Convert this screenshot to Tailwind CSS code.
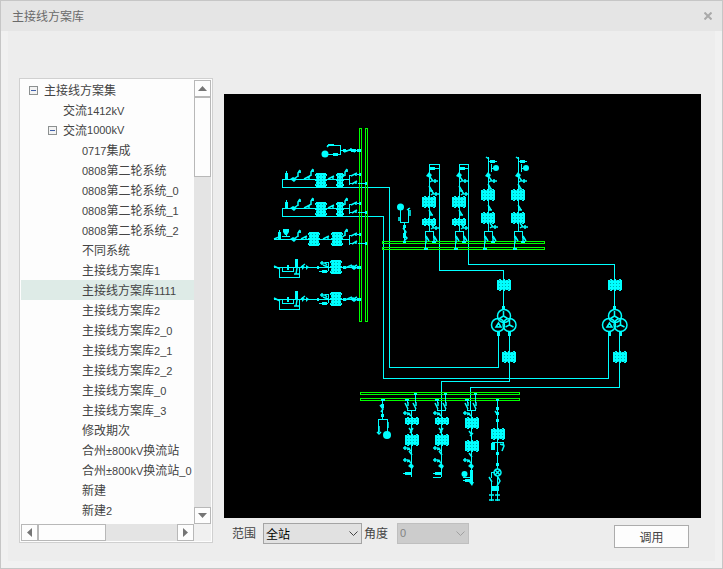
<!DOCTYPE html>
<html lang="zh-CN">
<head>
<meta charset="utf-8">
<title>主接线方案库</title>
<script src="https://cdn.jsdelivr.net/npm/@tailwindcss/browser@4"></script>
</head>
<body class="flex min-h-screen flex-col border border-[#c6c6c6] bg-[#f1f1f1] font-['Noto_Sans_CJK_SC',sans-serif] text-xs text-[#444] [&_small]:font-['Liberation_Sans','Noto_Sans_CJK_SC',sans-serif] [&_small]:text-[11px]">
<header class="flex h-[30px] items-center justify-between bg-[#e5e5e5] pr-[10px] pl-[11px]">
  <h1 class="text-[#6a6a6a]">主接线方案库</h1>
  <button type="button" aria-label="关闭" class="flex">
    <svg class="size-2" viewBox="0 0 8 8" fill="none" stroke="#a9a9a9" stroke-width="2"><path d="M.5.500l7 7M7.500.500l-7 7"/></svg>
  </button>
</header>

<main class="mx-[7px] mb-[7px] flex flex-1 items-start gap-[11px] bg-[#ededed] pt-[47px] pr-[14px] pl-[11px]">
  <nav aria-label="方案树" class="grid h-[465px] w-[194px] shrink-0 grid-cols-[1fr_17px] grid-rows-[1fr_17px] border border-[#d0d0d0] bg-[#fdfdfd] p-px">
    <ul role="tree" class="overflow-hidden leading-5 whitespace-nowrap [&_li]:h-5">
      <li role="treeitem" aria-expanded="true" class="flex items-center pl-2">
        <button type="button" aria-label="折叠" class="mr-[6px] flex"><svg class="size-[9px]" viewBox="0 0 9 9" shape-rendering="crispEdges"><rect x=".5" y=".5" width="8" height="8" fill="#f3f3f3" stroke="#8c9090"/><path d="M2 4.5h5" stroke="#3f5fa8"/></svg></button>主接线方案集</li>
      <li role="treeitem" class="pl-[42px]">交流<small>1412kV</small></li>
      <li role="treeitem" aria-expanded="true" class="flex items-center pl-[27px]">
        <button type="button" aria-label="折叠" class="mr-[6px] flex"><svg class="size-[9px]" viewBox="0 0 9 9" shape-rendering="crispEdges"><rect x=".5" y=".5" width="8" height="8" fill="#f3f3f3" stroke="#8c9090"/><path d="M2 4.5h5" stroke="#3f5fa8"/></svg></button>交流<small>1000kV</small></li>
      <li role="treeitem" class="pl-[61px]"><small>0717</small>集成</li>
      <li role="treeitem" class="pl-[61px]"><small>0808</small>第二轮系统</li>
      <li role="treeitem" class="pl-[61px]"><small>0808</small>第二轮系统<small>_0</small></li>
      <li role="treeitem" class="pl-[61px]"><small>0808</small>第二轮系统<small>_1</small></li>
      <li role="treeitem" class="pl-[61px]"><small>0808</small>第二轮系统<small>_2</small></li>
      <li role="treeitem" class="pl-[61px]">不同系统</li>
      <li role="treeitem" class="pl-[61px]">主接线方案库<small>1</small></li>
      <li role="treeitem" aria-selected="true" class="bg-[#deebe7] pl-[61px]">主接线方案库<small>1111</small></li>
      <li role="treeitem" class="pl-[61px]">主接线方案库<small>2</small></li>
      <li role="treeitem" class="pl-[61px]">主接线方案库<small>2_0</small></li>
      <li role="treeitem" class="pl-[61px]">主接线方案库<small>2_1</small></li>
      <li role="treeitem" class="pl-[61px]">主接线方案库<small>2_2</small></li>
      <li role="treeitem" class="pl-[61px]">主接线方案库<small>_0</small></li>
      <li role="treeitem" class="pl-[61px]">主接线方案库<small>_3</small></li>
      <li role="treeitem" class="pl-[61px]">修改期次</li>
      <li role="treeitem" class="pl-[61px]">合州<small>±800kV</small>换流站</li>
      <li role="treeitem" class="pl-[61px]">合州<small>±800kV</small>换流站<small>_0</small></li>
      <li role="treeitem" class="pl-[61px]">新建</li>
      <li role="treeitem" class="pl-[61px]">新建<small>2</small></li>
    </ul>
    <div class="flex flex-col bg-[#e4e4e4]">
      <button type="button" aria-label="向上滚动" class="flex h-[17px] items-center justify-center border border-[#b8b8b8] bg-[#fdfdfd]"><svg class="h-[5px] w-[9px]" viewBox="0 0 9 5" fill="#757575"><path d="M0 5L4.500 0 9 5z"/></svg></button>
      <div class="h-20 border border-[#b8b8b8] bg-[#fdfdfd]"></div>
      <button type="button" aria-label="向下滚动" class="mt-auto flex h-[17px] items-center justify-center border border-[#b8b8b8] bg-[#fdfdfd]"><svg class="h-[5px] w-[9px]" viewBox="0 0 9 5" fill="#757575"><path d="M0 0L4.500 5 9 0z"/></svg></button>
    </div>
    <div class="flex bg-[#e4e4e4]">
      <button type="button" aria-label="向左滚动" class="flex w-[17px] items-center justify-center border border-[#b8b8b8] bg-[#fdfdfd]"><svg class="h-[9px] w-[5px]" viewBox="0 0 5 9" fill="#757575"><path d="M5 0L0 4.500 5 9z"/></svg></button>
      <div class="w-[68px] border border-[#b8b8b8] bg-[#fdfdfd]"></div>
      <button type="button" aria-label="向右滚动" class="ml-auto flex w-[17px] items-center justify-center border border-[#b8b8b8] bg-[#fdfdfd]"><svg class="h-[9px] w-[5px]" viewBox="0 0 5 9" fill="#757575"><path d="M0 0L5 4.500 0 9z"/></svg></button>
    </div>
    <div class="bg-[#f0f0f0]"></div>
  </nav>

  <section class="min-w-0 flex-1 pt-4">
    <svg class="block w-full bg-black [&_circle]:stroke-[1.5px] [&_path:not([shape-rendering])]:stroke-[1.5px]" viewBox="224 94 477 424" fill="none" stroke="#0ff" stroke-width="1" role="img" aria-label="电气主接线图">
      <defs>
        <pattern id="weave" width="3" height="3" patternUnits="userSpaceOnUse"><rect width="3" height="3" fill="#0ff" stroke="none"/><rect x="1" y="1" width="1" height="1" fill="#0aa" stroke="none"/></pattern>
        <!-- breaker cabinets, origin at the centre -->
        <g id="cabTall" stroke="none" fill="url(#weave)"><rect x="-5" y="-7" width="10" height="14"/><path d="M-6-6H6v2H-6zM-6-1H6v2H-6zM-6 4H6v2H-6z"/></g>
        <g id="cabSlim" stroke="none" fill="url(#weave)"><rect x="-3" y="-7" width="6" height="14"/><path d="M-4-6H4v2H-4zM-4-1H4v2H-4zM-4 4H4v2H-4z"/></g>
        <g id="cabWide" stroke="none" fill="url(#weave)"><rect x="-7" y="-5" width="14" height="10"/><path d="M-5-6h2V6h-2zM-1-6h2V6h-2zM4-6h2V6H4z"/></g>
        <g id="cabLow" stroke="none" fill="url(#weave)"><rect x="-7" y="-3" width="14" height="6"/><path d="M-5-4h2V4h-2zM-1-4h2V4h-2zM4-4h2V4H4z"/></g>
        <!-- horizontal bay end: two disconnectors towards the double bus -->
        <g id="hFork"><path shape-rendering="crispEdges" d="M.5-3.500v9M0-3.500h2M8-4.500h4M0 4.500h3M9 4.500h9"/><path d="M2-3l6-3M3 5l5-3M7-6v3M7 2v3"/><path fill="#0ff" d="M10-6h2v3h-2zM16 3h2v3h-2z" stroke="none"/></g>
        <g id="hEarth"><path d="M0 0l4-3M4-2v-4l2-3M4-7h3M6-9v3"/></g>
        <g id="hSwitch"><path d="M0 0l6-3M5-2v3"/></g>
        <g id="hLine">
          <path shape-rendering="crispEdges" d="M282 179.500h67M282.500 179v9"/>
          <path fill="#0ff" stroke="none" d="M285 173h3v6h-3zM286 171h1v2h-1zM290 179l3-2 4 2-3 3z"/>
          <use href="#hEarth" x="294" y="179"/><use href="#hSwitch" x="304" y="179"/><use href="#hEarth" x="307" y="178"/>
          <use href="#cabTall" x="321" y="180"/><use href="#hSwitch" x="328" y="179"/><use href="#cabSlim" x="340" y="180"/><use href="#hEarth" x="341" y="178"/>
          <use href="#hFork" x="349" y="179"/>
        </g>
        <g id="hReactor">
          <path shape-rendering="crispEdges" d="M274 267.500h86M279.500 268v9.500h20v-10M282.500 268v3.500h11v-4M328.500 262v9M319 271.500h9M325 262.500h4"/>
          <path d="M274 266l6 3M297 268l-1 6M294 274h5M301 267l4-3M320 263h5l2 2M322 261v4M323 265l5 2M345 268l7-3M352 268l5-3"/>
          <path fill="#0ff" stroke="none" d="M287 265h2v5h-2zM295 259h3v8h-3zM302 265l3 2-3 3zM306 265l3 2-3 3zM317 266h2v3h-2zM322 270h5v3h-5zM343 266h3v3h-3zM350 267l3-2 4 3-3 2zM357 266h4v3h-4z"/>
          <use href="#cabTall" x="336" y="267"/>
        </g>
        <!-- vertical bays, origin on the feeder axis -->
        <g id="vEarth"><path d="M1-4l3 4h5M6-2v4M1 1l3-2"/></g>
        <g id="vSwitch"><path d="M0 0l3 5M0 5h4"/></g>
        <g id="vFork"><path shape-rendering="crispEdges" d="M-3.500 7V.500h8V7M-3.500 11v7M4.500 11v1"/><path d="M-3 5l3 5M5 5l3 5M-3 7v5M5 7v4"/><path fill="#0ff" stroke="none" d="M-5 17h4v2h-4zM3 10h4v2H3z"/></g>
        <g id="vLine">
          <path shape-rendering="crispEdges" d="M.5 164v67M0 164.500h10"/>
          <path fill="#0ff" stroke="none" d="M1 167h5v3H1zM6 168h4v1H6zM0 172l3 3-2 3-4-2z"/>
          <use href="#vEarth" x="0" y="181"/><use href="#vSwitch" x="0" y="186"/><use href="#vEarth" x="1" y="194"/>
          <use href="#cabWide" x="0" y="202"/><use href="#vSwitch" x="0" y="210"/><use href="#cabLow" x="0" y="222"/><use href="#vEarth" x="1" y="228"/>
          <use href="#vFork" x="0" y="231"/>
        </g>
        <g id="vTap">
          <path shape-rendering="crispEdges" d="M.5 157v74M0 161.500h9M3.500 164v8M4 168.500h3"/>
          <path d="M-2 157l3 2"/>
          <path fill="#0ff" stroke="none" d="M2 160h5v3H2zM0 172l3 3-2 3-4-2z"/><circle cx="8" cy="168" r="3" fill="#0ff" stroke="none"/>
          <use href="#vEarth" x="0" y="181"/><use href="#vSwitch" x="0" y="184"/><use href="#cabWide" x="0" y="195"/><use href="#vSwitch" x="0" y="205"/><use href="#cabWide" x="0" y="218"/><use href="#vEarth" x="1" y="227"/>
          <use href="#vFork" x="0" y="231"/>
        </g>
        <g id="lowFork"><path shape-rendering="crispEdges" d="M-3.500 400v3M4.500 394v9M-3.500 408v2.500h8V408"/><path d="M-6 403l3 6M2 403l3 6M-3 402v4M5 402v4"/><path fill="#0ff" stroke="none" d="M-6 399h4v2h-4zM3 393h3v2H3z"/></g>
        <g id="lowEarth"><path d="M0 3l-3-3h-5M-6-2v4M-4 2l3-2"/></g>
        <g id="lowBay">
          <use href="#lowFork"/><path shape-rendering="crispEdges" d="M.5 410v67"/>
          <use href="#lowEarth" y="413"/><use href="#cabLow" x="1" y="421"/><path d="M-2 428l3 4M-1 433l3-5"/><use href="#cabWide" x="1" y="440"/>
          <use href="#lowEarth" y="448"/><path d="M-2 451l3 4"/><use href="#lowEarth" y="460"/>
          <path fill="#0ff" stroke="none" d="M0 463l3 3-2 3-4-3zM-6 472h6v3h-6zM-8 473h2v1h-2z"/>
        </g>
        <g id="transformer">
          <circle cx="504" cy="316" r="6.500"/><circle cx="498" cy="325" r="6.500"/><circle cx="509.500" cy="325" r="6.500"/>
          <path d="M503.500 311v5l-4 2.500M503.500 316l4 2.500M509.500 319v6l-4 2M509.500 325l4 2M496 327l2.500-4 2.500 4z"/>
          <path fill="#0ff" stroke="none" d="M502 306h3v3h-3zM497 332h3v4h-3zM508 332h3v4h-3z"/>
          <use href="#cabWide" x="504" y="285"/><use href="#cabWide" x="509" y="357"/>
        </g>
      </defs>

      <path shape-rendering="crispEdges" d="M282 187.500h107.500v180h109V332M282.500 208v8.500h101v162h225V332M439.500 164v106.500h64V309M468.500 164v100.500h146V309M509.500 332v49.500h-68V411M619.500 332v55.500h-149V411"/>
      <path shape-rendering="crispEdges" stroke="#0f0" d="M359.500 128.500h2v193h-2zM365.500 128.500h2v193h-2zM382.500 241.500h162v2h-162zM382.500 247.500h162v2h-162zM360.500 392.500h159v2h-159zM360.500 398.500h159v2h-159z"/>

      <g>
        <path shape-rendering="crispEdges" d="M327 145.500h13.500v9H325M340 150.500h20"/>
        <path d="M327 147l2-2v-1M344 152l8-3M350 149l5 3"/>
        <circle cx="325" cy="154" r="3.500" fill="#0ff" stroke="none"/>
        <path fill="#0ff" stroke="none" d="M328 144h6v2h-6zM333 153h5v3h-5zM343 149h3v3h-3zM351 149h5v3h-5zM357 149h4v3h-4z"/>
      </g>
      <use href="#hLine"/><use href="#hLine" y="29"/>
      <g>
        <path shape-rendering="crispEdges" d="M274 239.500h75M282 236.500h8M286.500 236v-2"/>
        <path d="M274 239l5-2"/><path fill="#0ff" stroke="none" d="M278 232h3v7h-3zM279 230h1v2h-1zM290 239l3-2 4 2-3 3zM283 229h6v3l-2 3h-2l-2-3z"/>
        <use href="#hEarth" x="294" y="239"/><use href="#hSwitch" x="301" y="239"/><use href="#cabTall" x="314" y="239"/><use href="#hSwitch" x="323" y="239"/><use href="#cabTall" x="337" y="239"/><use href="#hEarth" x="341" y="238"/><use href="#hFork" x="349" y="239"/>
      </g>
      <use href="#hReactor"/><use href="#hReactor" y="32"/>

      <g>
        <path shape-rendering="crispEdges" d="M400.500 208v14.500h8V208M404.500 222v20"/>
        <path d="M407 210l3-2M403 228l3 4-2 3 3 3-3 3M399 217v4M410 210v6"/><circle cx="400.500" cy="207" r="3.500" fill="#0ff" stroke="none"/>
        <path fill="#0ff" stroke="none" d="M403 225h3v3h-3zM403 233h3v5h-3zM403 241h3v2h-3z"/>
      </g>
      <use href="#vLine" x="429"/><use href="#vLine" x="459"/><use href="#vTap" x="488"/><use href="#vTap" x="518"/>

      <use href="#transformer"/><use href="#transformer" x="111"/>

      <g>
        <path shape-rendering="crispEdges" d="M382.500 400v19.500M378.500 433v-13.500h9V433"/>
        <path d="M377 432l2 2 2-2M380 405l3 4-2 3M379 426v6M388 422v6"/><circle cx="387" cy="435" r="4" fill="#0ff" stroke="none"/>
        <path fill="#0ff" stroke="none" d="M381 399h4v2h-4zM381 404h3v4h-3zM381 414h3v3h-3z"/>
      </g>
      <use href="#lowBay" x="411"/><use href="#lowBay" x="441"/><path shape-rendering="crispEdges" d="M433 477.500h8"/>
      <g>
        <use href="#lowFork" x="471"/><path shape-rendering="crispEdges" d="M471.500 410v74M463 477.500h8"/>
        <use href="#lowEarth" x="471" y="413"/><use href="#cabWide" x="472" y="423"/><path d="M469 431l3 4M470 436l3-3"/><use href="#cabWide" x="472" y="446"/>
        <path d="M469 453l3 4"/><use href="#lowEarth" x="471" y="460"/>
        <path fill="#0ff" stroke="none" d="M471 463l3 3-2 3-4-3zM465 479h6v3h-6zM463 480h2v1h-2zM470 470h3v12h-3zM469 482h5l-2 4z"/><circle cx="464.500" cy="474" r="3" fill="#0ff" stroke="none"/>
      </g>
      <g>
        <path shape-rendering="crispEdges" d="M497.500 400v69M492 442.500h11.500M491.500 478v-5.500h3M491.500 482v19M497.500 476v25"/>
        <path d="M495 411l3 4M503 443l1 3-2 5M500 444l3 1M489 477l3 5M498 477l2 4-3 5M489 495h5M489 500h5M495 495h5M495 500h5M495 470l5 5M500 470l-5 5"/>
        <circle cx="497.500" cy="472.500" r="3.500"/>
        <path fill="#0ff" stroke="none" d="M496 399h3v2h-3zM496 407h3v3h-3zM496 412h3v3h-3zM496 419h3v3h-3zM491 443h4v7h-4zM496 452h3v3h-3zM496 463h3v3h-3zM492 486h7v5h-7z"/>
        <use href="#cabWide" x="498" y="434"/>
      </g>
    </svg>

    <form class="flex items-start pt-[5px] pr-3 pl-2">
      <label for="scope" class="w-[31px] leading-5">范围</label>
      <div class="relative w-[99px]">
        <select id="scope" class="block h-[21px] w-full appearance-none border border-[#a4a4a4] bg-[#e1e1e1] px-[2px] text-black"><option>全站</option></select>
        <svg class="pointer-events-none absolute top-2 right-1 h-[6px] w-[9px]" viewBox="0 0 9 6" fill="none" stroke="#444"><path d="M.5.500l4 4 4-4"/></svg>
      </div>
      <label for="angle" class="ml-[2px] w-[33px] leading-5">角度</label>
      <div class="relative w-[72px]">
        <select id="angle" disabled class="block h-[21px] w-full appearance-none border border-[#bfbfbf] bg-[#ccc] px-[2px] font-['Liberation_Sans',sans-serif] text-[11px] text-[#838383] opacity-100"><option>0</option></select>
        <svg class="pointer-events-none absolute top-2 right-1 h-[6px] w-[9px]" viewBox="0 0 9 6" fill="none" stroke="#a0a0a0"><path d="M.5.500l4 4 4-4"/></svg>
      </div>
      <button type="button" class="mt-[2px] ml-auto h-[23px] w-[75px] border border-[#acacac] bg-[#fdfdfd]">调用</button>
    </form>
  </section>
</main>
</body>
</html>
